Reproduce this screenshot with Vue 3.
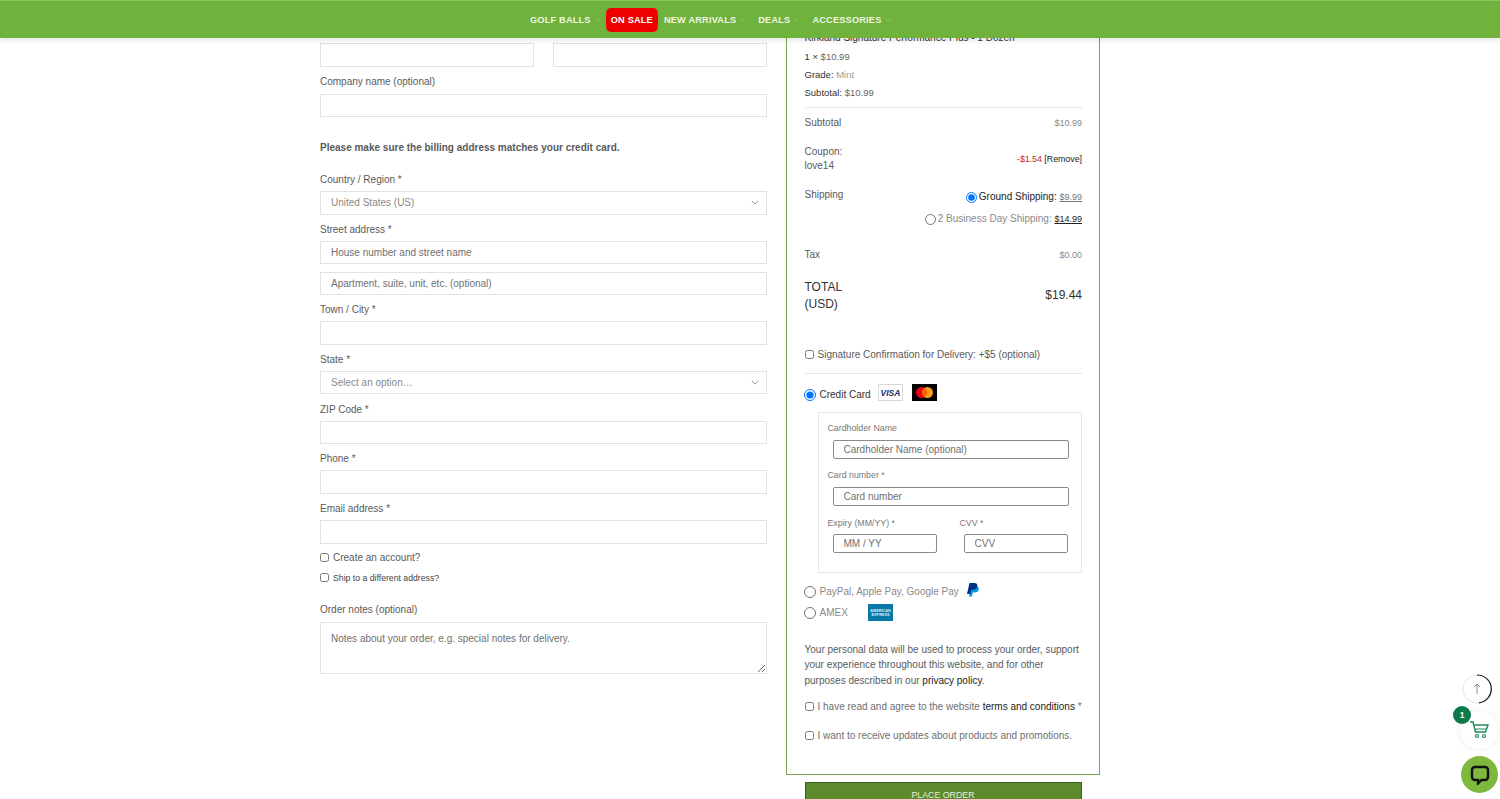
<template>
  <div class="page">
    <header class="topbar">
      <nav class="menu">
        <a v-for="item in menu" :key="item.label" class="menu-item" :class="{ sale: item.sale }">
          {{ item.label }}
          <svg v-if="!item.sale" class="caret" viewBox="0 0 10 6"><path d="M1 1l4 4 4-4" /></svg>
        </a>
      </nav>
    </header>

    <main class="checkout">
      <section class="billing">
        <div class="name-row">
          <input class="text-input" />
          <input class="text-input" />
        </div>
        <div class="field company">
          <label>Company name (optional)</label>
          <input class="text-input" />
        </div>
        <p class="notice">Please make sure the billing address matches your credit card.</p>

        <div v-for="f in fields" :key="f.label" class="field">
          <label>{{ f.label }}</label>
          <div v-if="f.select" class="select-box">
            <span>{{ f.select }}</span>
            <svg class="caret-dark" viewBox="0 0 10 6"><path d="M1 1l4 4 4-4" /></svg>
          </div>
          <input v-else class="text-input" :placeholder="f.placeholder" />
          <input v-if="f.second" class="text-input second" :placeholder="f.second" />
        </div>

        <label class="check first-check"><input type="checkbox" /> Create an account?</label>
        <label class="check small-check"><input type="checkbox" /> Ship to a different address?</label>

        <div class="notes">
          <label>Order notes (optional)</label>
          <textarea placeholder="Notes about your order, e.g. special notes for delivery."></textarea>
        </div>
      </section>

      <section class="order-col">
        <div class="order-box">
          <div class="product">
            <p class="product-title">Kirkland Signature Performance Plus - 1 Dozen</p>
            <p><b>1 ×</b> $10.99</p>
            <p><b>Grade:</b> <span class="muted">Mint</span></p>
            <p><b>Subtotal:</b> $10.99</p>
          </div>
          <div class="row subtotal">
            <span>Subtotal</span>
            <span class="amount">$10.99</span>
          </div>
          <div class="row coupon">
            <span>Coupon:<br />love14</span>
            <span class="discount"><em>-$1.54</em> [Remove]</span>
          </div>
          <div class="row shipping">
            <span>Shipping</span>
            <div class="ship-options">
              <label class="ship-on"><input type="radio" name="ship" checked />Ground Shipping: <u>$9.99</u></label>
              <label class="ship-off"><input type="radio" name="ship" />2 Business Day Shipping: <u>$14.99</u></label>
            </div>
          </div>
          <div class="row tax">
            <span>Tax</span>
            <span class="amount">$0.00</span>
          </div>
          <div class="row total">
            <span>TOTAL<br />(USD)</span>
            <span class="grand">$19.44</span>
          </div>
          <label class="check signature"><input type="checkbox" /> Signature Confirmation for Delivery: +$5 (optional)</label>

          <div class="pay-line credit">
            <input type="radio" name="pay" checked />
            <span>Credit Card</span>
            <svg class="card visa" viewBox="0 0 25 17">
              <rect x="0.5" y="0.5" width="24" height="16" fill="#fff" stroke="#d8d8d8" />
              <text x="12.5" y="11.5" text-anchor="middle">VISA</text>
            </svg>
            <svg class="card master" viewBox="0 0 25 17">
              <rect width="25" height="17" fill="#000" />
              <circle cx="9.5" cy="8.5" r="5.5" fill="#eb001b" />
              <circle cx="15.5" cy="8.5" r="5.5" fill="#f79e1b" />
              <path d="M12.5 3.9a5.5 5.5 0 0 1 0 9.2a5.5 5.5 0 0 1 0-9.2z" fill="#ff5f00" />
            </svg>
          </div>
          <div class="card-form">
            <label>Cardholder Name</label>
            <input class="card-input" placeholder="Cardholder Name (optional)" />
            <label>Card number *</label>
            <input class="card-input" placeholder="Card number" />
            <div class="card-split">
              <div>
                <label>Expiry (MM/YY) *</label>
                <input class="card-input" placeholder="MM / YY" />
              </div>
              <div>
                <label>CVV *</label>
                <input class="card-input" placeholder="CVV" />
              </div>
            </div>
          </div>
          <div class="pay-line paypal">
            <input type="radio" name="pay" />
            <span>PayPal, Apple Pay, Google Pay</span>
            <svg class="pp" viewBox="0 0 12 14">
              <path d="M4.2 3h4.6c2.2 0 3.4 1.200 3 3.200-.4 2.100-2 3.300-4.200 3.300H5.700L5 13.500H2z" fill="#009cde" />
              <path d="M2.500 0h4.700c2.300 0 3.500 1.200 3.100 3.300-.4 2.200-2 3.500-4.300 3.500H4.100L3.400 11H0z" fill="#003087" />
            </svg>
          </div>
          <div class="pay-line amex">
            <input type="radio" name="pay" />
            <span>AMEX</span>
            <svg class="card amex-card" viewBox="0 0 25 17">
              <rect width="25" height="17" fill="#0a79a8" />
              <text x="12.500" y="8" text-anchor="middle">AMERICAN</text>
              <text x="12.500" y="12" text-anchor="middle">EXPRESS</text>
            </svg>
          </div>
          <p class="privacy">
            Your personal data will be used to process your order, support your experience throughout
            this website, and for other purposes described in our <a>privacy policy</a>.
          </p>
          <label class="check terms"><input type="checkbox" /> <span>I have read and agree to the website <a>terms and conditions</a> *</span></label>
          <label class="check updates"><input type="checkbox" /> I want to receive updates about products and promotions.</label>
        </div>
        <button class="place-order">PLACE ORDER</button>
      </section>
    </main>

    <div class="to-top">
      <svg viewBox="0 0 30 30">
        <circle cx="15" cy="15" r="14" fill="#fff" stroke="#e6e6e6" />
        <path d="M15 1a14 14 0 0 1 2 27.900" fill="none" stroke="#222" stroke-width="1.200" />
        <path d="M15 20V10M12 13l3-3 3 3" fill="none" stroke="#8a8a92" stroke-width="1" />
      </svg>
    </div>
    <div class="cart-fab">
      <svg viewBox="0 0 20 18">
        <path d="M1 1h3l2.500 10h10L19 4H5" fill="none" stroke="#1f8a5b" stroke-width="1.400" />
        <path d="M5.500 8h12" fill="none" stroke="#1f8a5b" stroke-width="1" />
        <circle cx="8" cy="15" r="1.500" fill="none" stroke="#1f8a5b" stroke-width="1.200" />
        <circle cx="15" cy="15" r="1.500" fill="none" stroke="#1f8a5b" stroke-width="1.200" />
      </svg>
      <span class="cart-badge">1</span>
    </div>
    <div class="chat-fab">
      <svg viewBox="0 0 20 20">
        <path d="M5 2h10a3 3 0 0 1 3 3v7a3 3 0 0 1-3 3h-3.500L8 18.500V15H5a3 3 0 0 1-3-3V5a3 3 0 0 1 3-3z" fill="none" stroke="#111" stroke-width="2.400" />
      </svg>
    </div>
  </div>
</template>

<script setup>
const menu = [
  { label: 'GOLF BALLS' },
  { label: 'ON SALE', sale: true },
  { label: 'NEW ARRIVALS' },
  { label: 'DEALS' },
  { label: 'ACCESSORIES' }
]

const fields = [
  { label: 'Country / Region *', select: 'United States (US)' },
  { label: 'Street address *', placeholder: 'House number and street name', second: 'Apartment, suite, unit, etc. (optional)' },
  { label: 'Town / City *' },
  { label: 'State *', select: 'Select an option…' },
  { label: 'ZIP Code *' },
  { label: 'Phone *' },
  { label: 'Email address *' }
]
</script>

<style>
html, body {
  margin: 0;
  background: #fff;
}
</style>

<style scoped>
.page {
  position: relative;
  height: 799px;
  overflow: hidden;
  background: #fff;
  font-family: "Liberation Sans", Arial, sans-serif;
  font-size: 10px;
  color: #5a5a5a;
}
p { margin: 0; }
input, textarea, button { font-family: inherit; box-sizing: border-box; }

.topbar {
  position: absolute;
  top: 0;
  left: 0;
  right: 0;
  height: 38px;
  z-index: 5;
  background: #6fb23c;
  border-top: 1px solid #8ec25f;
  box-sizing: border-box;
  box-shadow: 0 2px 6px rgba(0, 0, 0, 0.12);
}
.menu {
  display: flex;
  align-items: center;
  height: 37px;
  padding-left: 530px;
}
.menu-item {
  display: flex;
  align-items: center;
  gap: 2px;
  margin-right: 12px;
  font-weight: 700;
  font-size: 9.200px;
  letter-spacing: 0.2px;
  color: #eef6e4;
  white-space: nowrap;
}
.menu-item.sale {
  background: #ee0000;
  color: #fff;
  height: 24px;
  padding: 0 5px;
  border-radius: 5px;
  margin: 0 6px 0 -7px;
}
.caret {
  width: 8px;
  height: 5px;
  fill: none;
  stroke: #93c86a;
  stroke-width: 1;
}

.checkout {
  display: flex;
  gap: 19px;
  padding-left: 320px;
}

.billing {
  width: 447px;
  padding-top: 43px;
}
.name-row {
  display: flex;
  gap: 19px;
}
.text-input {
  display: block;
  width: 100%;
  height: 23.500px;
  border: 1px solid #e2e2e2;
  background: #fff;
  padding: 0 10px;
  font-size: 10px;
  outline: none;
}
.text-input::placeholder, textarea::placeholder, .card-input::placeholder {
  color: #707070;
  opacity: 1;
}
.field {
  margin-bottom: 4.300px;
}
.field label {
  display: block;
  line-height: 20px;
  padding-top: 1px;
  margin-bottom: 1px;
  font-size: 10px;
}
.notes label {
  display: block;
  line-height: 20px;
  margin-bottom: 2px;
  font-size: 10px;
}
.company {
  margin-top: 4px;
}
.company label {
  margin-bottom: 2px;
}
.second {
  margin-top: 8px;
  height: 22.500px;
}
.notice {
  margin: 24px 0 14px;
  line-height: 14px;
  font-weight: 700;
  font-size: 10px;
}
.select-box {
  display: flex;
  align-items: center;
  justify-content: space-between;
  box-sizing: border-box;
  height: 23.500px;
  border: 1px solid #e2e2e2;
  padding: 0 7px 1px 10px;
  color: #8a8a8a;
}
.caret-dark {
  width: 8px;
  height: 5px;
  fill: none;
  stroke: #777;
  stroke-width: 1;
}
.check {
  display: flex;
  align-items: center;
  line-height: 14px;
  font-size: 10px;
}
.check input {
  width: 9px;
  height: 9px;
  margin: -1px 4px 0 0;
}
.first-check {
  margin-top: 7px;
}
.small-check {
  margin-top: 6px;
  font-size: 8.700px;
  color: #444;
}
.notes {
  margin-top: 15px;
}
textarea {
  display: block;
  width: 100%;
  height: 52px;
  border: 1px solid #e2e2e2;
  padding: 10px 10px;
  font-size: 10px;
  outline: none;
}

.order-col {
  width: 314px;
}
.order-box {
  box-sizing: border-box;
  height: 775px;
  border: 1px solid #7da64e;
  border-top: 0;
  padding: 29px 17px 0 17.500px;
}
.product {
  border-bottom: 1px solid #e6e6e6;
  padding-bottom: 5px;
  line-height: 18px;
  font-size: 9.500px;
  color: #666;
}
.product-title {
  margin-bottom: 1px;
  font-size: 10px;
  color: #333;
}
.product b {
  font-weight: 400;
  color: #333;
}
.muted { color: #999; }
.row {
  display: flex;
  justify-content: space-between;
}
.amount { color: #888; font-size: 9px; }
.subtotal {
  align-items: center;
  margin-top: 8px;
  line-height: 14px;
}
.coupon {
  align-items: center;
  margin-top: 15px;
  line-height: 14px;
}
.discount {
  font-size: 8.800px;
  color: #222;
}
.discount em {
  font-style: normal;
  color: #c02a2a;
}
.shipping {
  margin-top: 15px;
  line-height: 14px;
}
.ship-options {
  display: flex;
  flex-direction: column;
  align-items: flex-end;
  gap: 8px;
  margin-top: 2px;
}
.ship-options label {
  display: flex;
  align-items: center;
  white-space: pre;
}
.ship-options input {
  width: 11px;
  height: 11px;
  margin: 0 2px 0 0;
}
.ship-on { color: #222; }
.ship-off { color: #8a8a8a; }
.ship-on u { color: #777; font-size: 9px; }
.ship-off u { color: #222; font-size: 9px; }
.tax {
  align-items: center;
  margin-top: 22px;
  line-height: 14px;
}
.total {
  align-items: center;
  margin-top: 16.500px;
  font-size: 12px;
  line-height: 17.500px;
  color: #333;
}
.grand { font-size: 12px; color: #333; }
.signature {
  margin-top: 34px;
  padding-bottom: 11px;
  border-bottom: 1px solid #e6e6e6;
}
.pay-line {
  display: flex;
  align-items: center;
  height: 20px;
  font-size: 10px;
  color: #333;
}
.pay-line input {
  width: 12px;
  height: 12px;
  margin: 0 4px 0 -1px;
}
.credit { margin-top: 11px; }
.credit span { margin-right: 7px; }
.card { width: 25px; height: 17px; margin-top: -5px; }
.visa { margin-right: 9px; }
.visa text {
  font-family: "Liberation Sans", sans-serif;
  font-size: 8.500px;
  font-weight: 700;
  font-style: italic;
  fill: #1a2a6c;
}
.card-form {
  box-sizing: border-box;
  height: 161px;
  margin: 7px 0 9px 13px;
  border: 1px solid #e6e6e6;
  padding: 7px 13px 0 9px;
  font-size: 8.800px;
}
.card-form label {
  display: block;
  line-height: 16px;
  color: #777;
}
.card-input {
  display: block;
  width: 236px;
  height: 19px;
  margin: 4px 0 8.500px 5px;
  border: 1px solid #8a8a8a;
  border-radius: 2px;
  padding: 0 10px;
  font-size: 10px;
  outline: none;
}
.card-split {
  display: flex;
  gap: 23px;
}
.card-split .card-input { margin-top: 3px; }
.card-split > div:first-child .card-input { width: 104px; }
.card-split > div:last-child .card-input { width: 104px; margin-left: 4px; }
.paypal, .amex { color: #8a8a8a; }
.paypal span { margin-right: 8px; }
.pp { width: 12px; height: 14px; margin-top: -3px; }
.amex { margin-top: 1px; }
.amex span { margin-right: 20px; }
.amex-card { margin-top: -1px; }
.amex-card text {
  font-family: "Liberation Sans", sans-serif;
  font-size: 3.800px;
  font-weight: 700;
  fill: #d6eef8;
}
.privacy {
  margin-top: 19px;
  line-height: 15.750px;
  color: #5a5a5a;
}
.privacy a, .terms a { color: #222; }
.terms { margin-top: 11px; white-space: nowrap; color: #6f6f6f; }
.updates { margin-top: 15px; color: #6f6f6f; white-space: nowrap; }
.place-order {
  display: block;
  width: 277px;
  height: 30px;
  margin: 7px 0 0 18.500px;
  background: #5c8a2c;
  border: 1px solid #3d5c1e;
  color: #e8f0dc;
  font-size: 8.800px;
  padding: 0 0 5px;
}

.to-top {
  position: absolute;
  left: 1462px;
  top: 674px;
  width: 30px;
  height: 30px;
}
.cart-fab {
  position: absolute;
  left: 1460px;
  top: 711px;
  width: 38px;
  height: 38px;
  border-radius: 50%;
  background: #fff;
  box-shadow: 0 0 6px rgba(0, 0, 0, 0.08);
  display: flex;
  align-items: center;
  justify-content: center;
}
.cart-fab svg { width: 20px; height: 18px; }
.cart-badge {
  position: absolute;
  left: -7px;
  top: -5px;
  width: 18px;
  height: 18px;
  border-radius: 50%;
  background: #0b7a4b;
  color: #fff;
  font-size: 8.500px;
  font-weight: 700;
  line-height: 18px;
  text-align: center;
}
.chat-fab {
  position: absolute;
  left: 1461px;
  top: 756px;
  width: 37px;
  height: 37px;
  border-radius: 50%;
  background: #7fb83e;
  display: flex;
  align-items: center;
  justify-content: center;
}
.chat-fab svg { width: 20px; height: 20px; }
</style>
